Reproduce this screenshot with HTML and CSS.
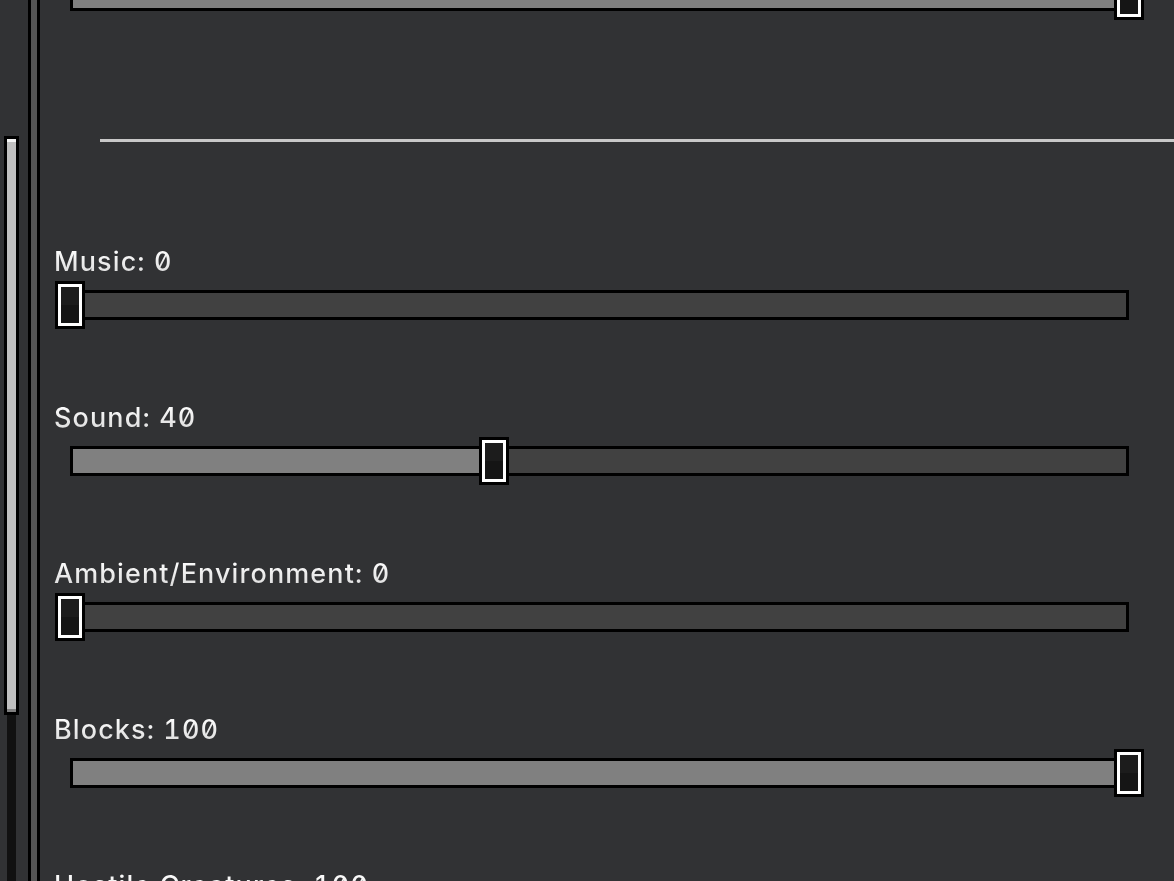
FILE: index.html
```html
<!DOCTYPE html>
<html lang="en">

<head>
    <meta charset="UTF-8">
    <title>Sound Settings</title>
    <link rel="stylesheet" href="styles.css">
</head>

<body>
    <div class="page">
        <div class="sidebar">
            <div class="scroll">
                <div class="scroll-track">
                    <div class="scroll-thumb"></div>
                </div>
            </div>
            <div class="divider"></div>
        </div>

        <div class="content">
            <div class="option">
                <div class="label">Master Volume: 100</div>
                <div class="slider" style="--v: 1">
                    <div class="track"><div class="fill"></div></div>
                    <div class="thumb"></div>
                </div>
            </div>

            <div class="separator"></div>

            <div class="option">
                <div class="label">Music: 0</div>
                <div class="slider" style="--v: 0">
                    <div class="track"><div class="fill"></div></div>
                    <div class="thumb"></div>
                </div>
            </div>

            <div class="option">
                <div class="label">Sound: 40</div>
                <div class="slider" style="--v: 0.4">
                    <div class="track"><div class="fill"></div></div>
                    <div class="thumb"></div>
                </div>
            </div>

            <div class="option">
                <div class="label">Ambient/Environment: 0</div>
                <div class="slider" style="--v: 0">
                    <div class="track"><div class="fill"></div></div>
                    <div class="thumb"></div>
                </div>
            </div>

            <div class="option">
                <div class="label">Blocks: 100</div>
                <div class="slider" style="--v: 1">
                    <div class="track"><div class="fill"></div></div>
                    <div class="thumb"></div>
                </div>
            </div>

            <div class="option">
                <div class="label">Hostile Creatures: 100</div>
                <div class="slider" style="--v: 1">
                    <div class="track"><div class="fill"></div></div>
                    <div class="thumb"></div>
                </div>
            </div>
        </div>
    </div>
</body>

</html>
```

FILE: styles.css
```css
* {
    box-sizing: border-box;
}

html,
body {
    margin: 0;
    padding: 0;
    height: 100%;
    overflow: hidden;
    background: #313234;
}

.page {
    display: flex;
    height: 881px;
    overflow: hidden;
}

/* left scrollbar + panel edge */
.sidebar {
    display: flex;
    width: 40px;
    flex-shrink: 0;
}

.scroll {
    width: 28px;
    padding-left: 4px;
}

.scroll-track {
    width: 15px;
    height: 100%;
    background: linear-gradient(to right, transparent 3px, #111111 3px, #111111 12px, transparent 12px);
}

.scroll-thumb {
    margin-top: 136px;
    height: 579px;
    border: 3px solid #000;
    background: #c0c0c0;
    box-shadow: inset 0 3px #f4f4f4, inset 0 -3px #808080;
}

.divider {
    width: 12px;
    border-left: 3px solid #000;
    border-right: 3px solid #000;
    background: #555555;
}

/* options */
.content {
    flex: 1;
    padding-left: 14px;
    margin-top: -61px;
    display: flex;
    flex-direction: column;
    gap: 75px;
}

.content > * {
    flex-shrink: 0;
}

.option {
    display: flex;
    flex-direction: column;
    gap: 5px;
}

.label {
    height: 28px;
    font-family: Inter, "DejaVu Sans", sans-serif;
    font-feature-settings: "zero", "tnum";
    font-weight: 500;
    font-size: 27px;
    line-height: 28px;
    letter-spacing: 1.1px;
    white-space: nowrap;
    background: linear-gradient(#ffffff, #dadada);
    -webkit-background-clip: text;
    background-clip: text;
    color: transparent;
    align-self: flex-start;
}

.slider {
    position: relative;
    margin-left: 1px;
    width: 1089px;
    height: 48px;
    padding: 9px 15px;
}

.track {
    height: 30px;
    border: 3px solid #000;
    background: #414141;
}

.fill {
    height: 100%;
    width: calc(var(--v) * 100%);
    background: #808080;
}

.thumb {
    position: absolute;
    top: 0;
    left: calc(var(--v) * (100% - 30px));
    width: 30px;
    height: 48px;
    border: 3px solid #000;
    background: linear-gradient(#1c1c1c 50%, #151515 50%);
    box-shadow: inset 0 0 0 3px #ffffff;
}

.separator {
    height: 3px;
    margin: 44px 0 31px 46px;
    background: #c8c8c8;
}
```
